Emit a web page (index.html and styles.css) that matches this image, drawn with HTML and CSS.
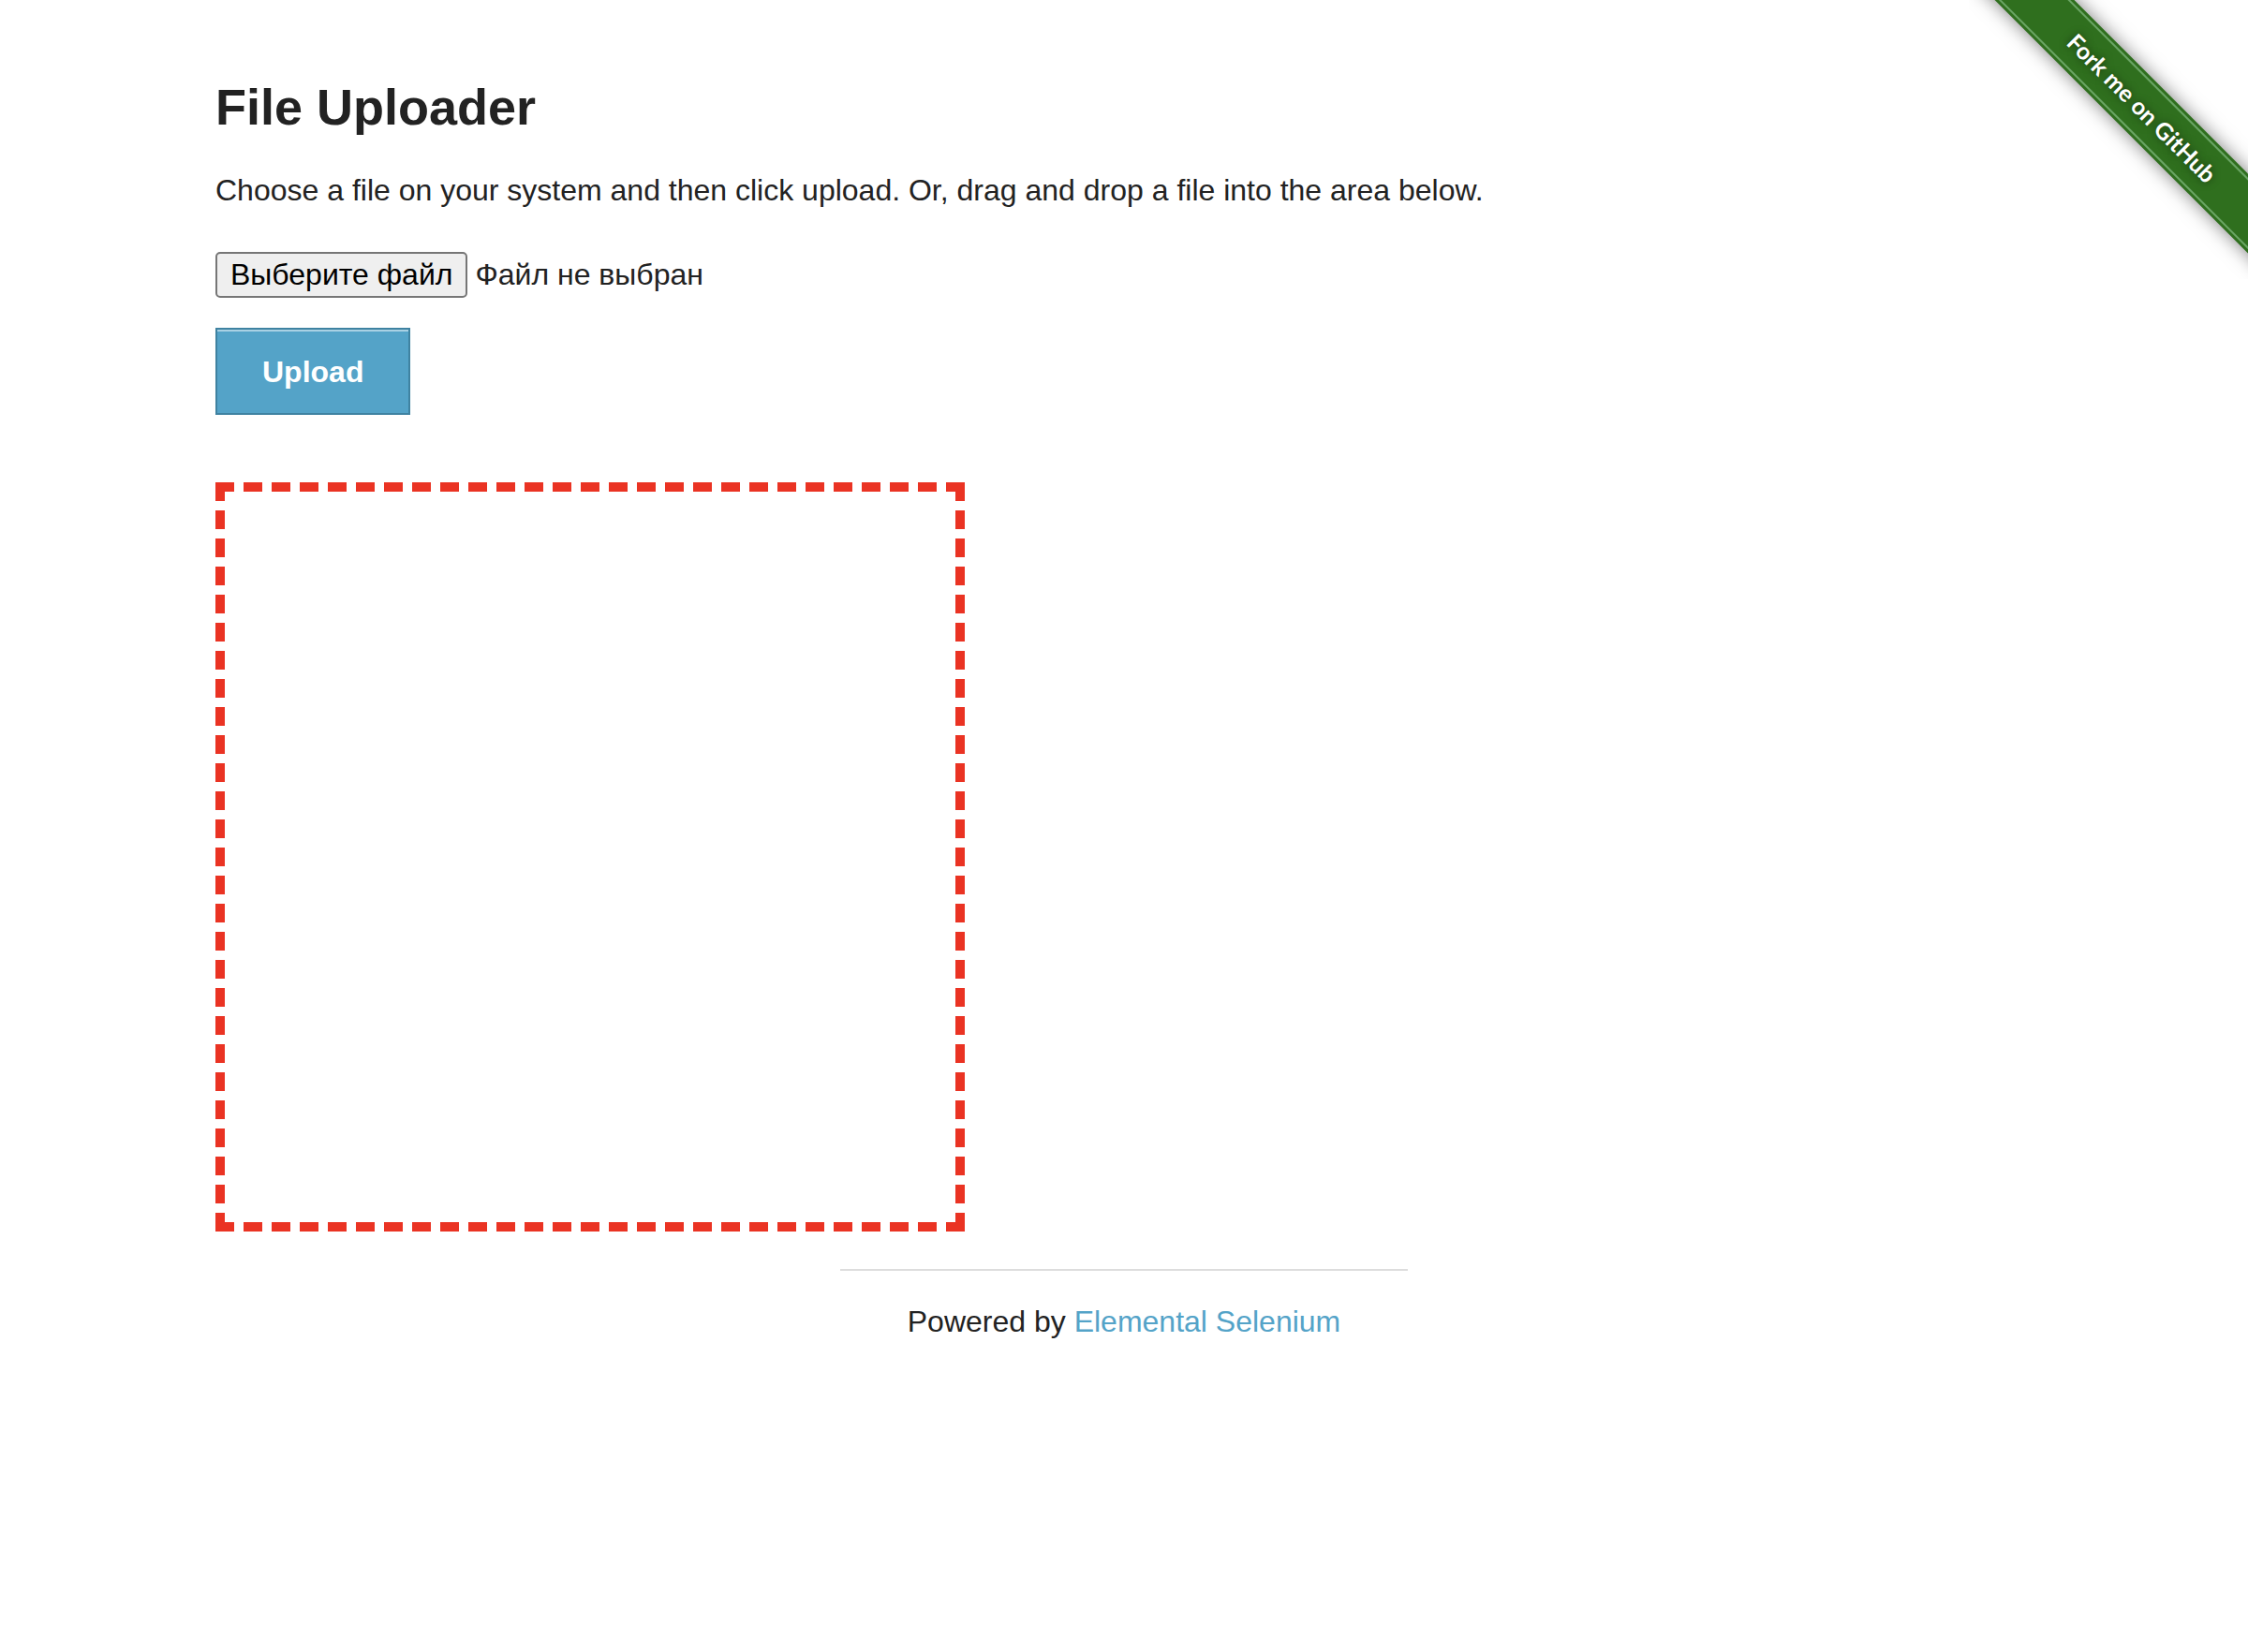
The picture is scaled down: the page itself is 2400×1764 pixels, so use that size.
FILE: index.html
```html
<!DOCTYPE html>
<html lang="en">
<head>
<meta charset="utf-8">
<meta name="viewport" content="width=device-width, initial-scale=1">
<title>File Uploader</title>
<link rel="stylesheet" href="styles.css">
</head>
<body>
<a class="ribbon" href="#github"><span class="ribbon-band">Fork me on GitHub</span></a>
<main class="row">
  <h1 class="title">File Uploader</h1>
  <p class="intro">Choose a file on your system and then click upload. Or, drag and drop a file into the area below.</p>
  <form class="upload-form">
    <label class="file-picker" lang="ru">
      <input class="file-input" type="file" name="file">
      <span class="file-button">Выберите файл</span>
      <span>Файл не выбран</span>
    </label>
    <button class="submit" type="submit">Upload</button>
  </form>
  <div class="drop-area"></div>
</main>
<footer class="footer">
  <hr class="rule">
  <p class="powered">Powered by <a class="link" href="#elemental">Elemental Selenium</a></p>
</footer>
</body>
</html>
```
FILE: styles.css
```css
*, *::before, *::after {
  box-sizing: border-box;
}

body {
  margin: 0;
  background: #fff;
  color: #222;
  font-family: "Liberation Sans", Arial, sans-serif;
  font-size: 32px;
  line-height: 51px;
}

.row {
  max-width: 2000px;
  margin: 0 auto;
  padding: 76px 30px 0;
}

.title {
  margin: 0 0 26px;
  font-size: 54px;
  line-height: 76px;
}

.intro {
  margin: 0 0 40px;
}

.upload-form {
  display: flex;
  flex-direction: column;
  align-items: flex-start;
  gap: 32px;
  margin-bottom: 72px;
}

.file-picker {
  position: relative;
  display: flex;
  align-items: center;
  gap: 8px;
  line-height: 37px;
}

.file-input {
  position: absolute;
  inset: 0;
  width: 100%;
  opacity: 0;
}

.file-button {
  padding: 4px 14px;
  border: 2px solid #767676;
  border-radius: 5px;
  background: #efefef;
  color: #000;
}

.submit {
  padding: 27px 48px 25px;
  border: 2px solid #3f82a1;
  border-radius: 0;
  background: #54a3c8;
  box-shadow: inset 0 2px 0 #a9d1e4;
  color: #fff;
  font: bold 32px/37px "Liberation Sans", Arial, sans-serif;
}

.drop-area {
  width: 800px;
  max-width: 100%;
  aspect-ratio: 1;
  border: 10px dashed #ea3323;
}

.footer {
  width: 606px;
  max-width: 100%;
  margin: 40px auto 0;
  text-align: center;
}

.rule {
  margin: 0 0 29px;
  border: 0;
  border-top: 2px solid #ddd;
}

.powered {
  margin: 0;
}

.link {
  color: #54a3c8;
  text-decoration: none;
}

.ribbon {
  position: absolute;
  top: 0;
  right: 0;
  width: 298px;
  height: 298px;
  overflow: hidden;
}

.ribbon-band {
  position: absolute;
  top: 85px;
  right: -107px;
  width: 440px;
  height: 60px;
  background: #2f6f1e;
  box-shadow: 0 0 20px rgba(0, 0, 0, 0.5);
  color: #fff;
  font: 700 25px/60px Lato, sans-serif;
  text-align: center;
  text-shadow: 0 0 8px rgba(0, 0, 0, 0.5);
  transform: rotate(45deg);
}

.ribbon-band::before {
  content: "";
  position: absolute;
  inset: 3px 0;
  border: solid #6aa564;
  border-width: 2px 0;
}
```
